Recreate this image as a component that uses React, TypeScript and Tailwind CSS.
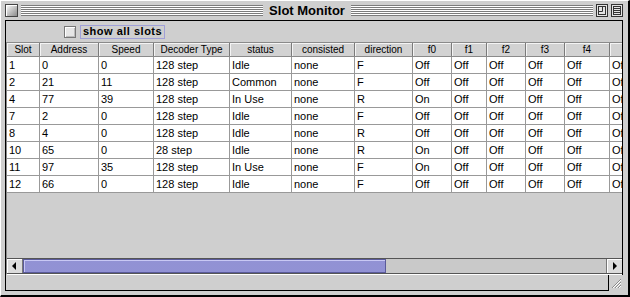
import { useState } from 'react';

const COLUMNS = [
  'Slot',
  'Address',
  'Speed',
  'Decoder Type',
  'status',
  'consisted',
  'direction',
  'f0',
  'f1',
  'f2',
  'f3',
  'f4',
  '',
];

// slot, address, speed, decoder, status, consisted, direction, f0
const SLOTS: [string, string, string, string, string, string, string, string][] = [
  ['1', '0', '0', '128 step', 'Idle', 'none', 'F', 'Off'],
  ['2', '21', '11', '128 step', 'Common', 'none', 'F', 'Off'],
  ['4', '77', '39', '128 step', 'In Use', 'none', 'R', 'On'],
  ['7', '2', '0', '128 step', 'Idle', 'none', 'F', 'Off'],
  ['8', '4', '0', '128 step', 'Idle', 'none', 'R', 'Off'],
  ['10', '65', '0', '28 step', 'Idle', 'none', 'R', 'On'],
  ['11', '97', '35', '128 step', 'In Use', 'none', 'F', 'On'],
  ['12', '66', '0', '128 step', 'Idle', 'none', 'F', 'Off'],
];

const gridCols =
  'grid grid-cols-[33px_59px_55px_76px_62px_63px_58px_39px_35px_39px_39px_45px_40px]';

function Stripes() {
  return (
    <div className="flex-1 h-[11px] bg-[repeating-linear-gradient(to_bottom,#7c7c7c_0px,#7c7c7c_1px,#ffffff_1px,#ffffff_2px)]" />
  );
}

function TitleBar() {
  return (
    <div className="h-[19px] flex items-center">
      <div className="w-[13px] h-[13px] border border-[#444] bg-gradient-to-br from-[#ffffff] to-[#8c8c8c] shadow-[inset_1px_1px_0_#fff]" />
      <div className="w-[3px]" />
      <Stripes />
      <span className="px-[6px] text-[13px] font-bold leading-none text-black [font-family:'Liberation_Sans',Arial,sans-serif]">
        Slot Monitor
      </span>
      <Stripes />
      <div className="w-[3px]" />
      <svg width="12" height="13" viewBox="0 0 12 13" className="shrink-0">
        <rect x="0.5" y="0.5" width="11" height="12" fill="#e4e4e4" stroke="#333" />
        <rect x="2.5" y="2.5" width="7" height="8" fill="none" stroke="#333" />
        <path d="M2.5 7.5 H6.5 V2.5" fill="none" stroke="#333" />
      </svg>
      <div className="w-[3px]" />
      <svg width="12" height="13" viewBox="0 0 12 13" className="shrink-0">
        <rect x="0.5" y="0.5" width="11" height="12" fill="#e4e4e4" stroke="#333" />
        <path d="M2 4.5 H10 M2 6.5 H10 M2 8.5 H10" stroke="#333" />
        <rect x="2.5" y="2.5" width="7" height="8" fill="none" stroke="#333" />
      </svg>
    </div>
  );
}

function Checkbox() {
  const [checked, setChecked] = useState(false);
  return (
    <div className="h-[21px] flex items-center pl-[58px]">
      <button
        type="button"
        onClick={() => setChecked(!checked)}
        className="w-[12px] h-[12px] border border-[#777] bg-[#e6e6e6] shadow-[inset_1px_1px_0_#fff,inset_-1px_-1px_0_#bbb] text-[10px] leading-none"
      >
        {checked ? '✓' : ''}
      </button>
      <span className="ml-[4px] h-[14px] flex items-center border border-[#a0a0d8] px-[2px] text-[11px] font-bold tracking-[0.5px] text-black [font-family:'Liberation_Sans',Arial,sans-serif]">
        show all slots
      </span>
    </div>
  );
}

function SlotTable() {
  return (
    <div className="w-[615px] overflow-hidden">
      <div className={`${gridCols} h-[14px] border-b border-[#8a8a8a]`}>
        {COLUMNS.map((c, i) => (
          <div
            key={i}
            className="border-r border-[#7a7a7a] shadow-[inset_1px_1px_0_#f4f4f4] bg-[#d2d2d2] text-[10px] leading-[13px] text-center text-black [font-family:'Liberation_Sans',Arial,sans-serif]"
          >
            {c}
          </div>
        ))}
      </div>
      {SLOTS.map((r) => (
        <div key={r[0]} className={`${gridCols} h-[17px] bg-white`}>
          {[...r, 'Off', 'Off', 'Off', 'Off', 'Off'].map((v, i) => (
            <div
              key={i}
              className="border-r border-b border-[#999] pl-[2px] text-[11px] leading-[16px] text-black whitespace-nowrap overflow-hidden [font-family:'Liberation_Sans',Arial,sans-serif]"
            >
              {v}
            </div>
          ))}
        </div>
      ))}
    </div>
  );
}

function ScrollBar() {
  return (
    <div className="h-[16px] flex border-y border-[#555] bg-[#c9c9c9]">
      <div className="w-[16px] flex items-center justify-center border-r border-[#777] bg-[#dcdcdc] shadow-[inset_1px_1px_0_#fff]">
        <svg width="5" height="8" viewBox="0 0 5 8">
          <path d="M4 0 L0 4 L4 8 Z" fill="#000" />
        </svg>
      </div>
      <div className="w-[363px] border border-[#5a5a9a] bg-[#a4a4e2] bg-[radial-gradient(#7c7cc4_0.6px,transparent_0.8px)] bg-[length:2px_2px] shadow-[inset_1px_1px_0_#c8c8f4]" />
      <div className="flex-1" />
      <div className="w-[16px] flex items-center justify-center border-l border-[#777] bg-[#dcdcdc] shadow-[inset_1px_1px_0_#fff]">
        <svg width="5" height="8" viewBox="0 0 5 8">
          <path d="M1 0 L5 4 L1 8 Z" fill="#000" />
        </svg>
      </div>
    </div>
  );
}

function Grip() {
  return (
    <svg width="14" height="15" viewBox="0 0 14 15" className="shrink-0">
      <path d="M3 13 L12 4 M6 13 L12 7 M9 13 L12 10" stroke="#8a8a8a" strokeWidth="1" />
      <path d="M4 13 L12 5 M7 13 L12 8 M10 13 L12 11" stroke="#ffffff" strokeWidth="1" />
    </svg>
  );
}

export default function App() {
  return (
    <div className="w-[630px] h-[297px] flex flex-col bg-[#cfcfcf] border-l border-t border-white border-r-2 border-b-2 border-r-black border-b-black pl-[4px] pr-[5px] pb-[4px]">
      <TitleBar />
      <div className="flex-1 flex flex-col border-t border-black">
        <div className="flex-1 flex flex-col border-l border-r border-black">
          <Checkbox />
          <div className="flex-1 flex flex-col border-l border-t border-[#8a8a8a] border-b border-b-white">
            <SlotTable />
            <div className="flex-1" />
            <ScrollBar />
          </div>
        </div>
        <div className="h-[16px] flex">
          <div className="flex-1 border-l border-b border-r border-black" />
          <Grip />
        </div>
      </div>
    </div>
  );
}
